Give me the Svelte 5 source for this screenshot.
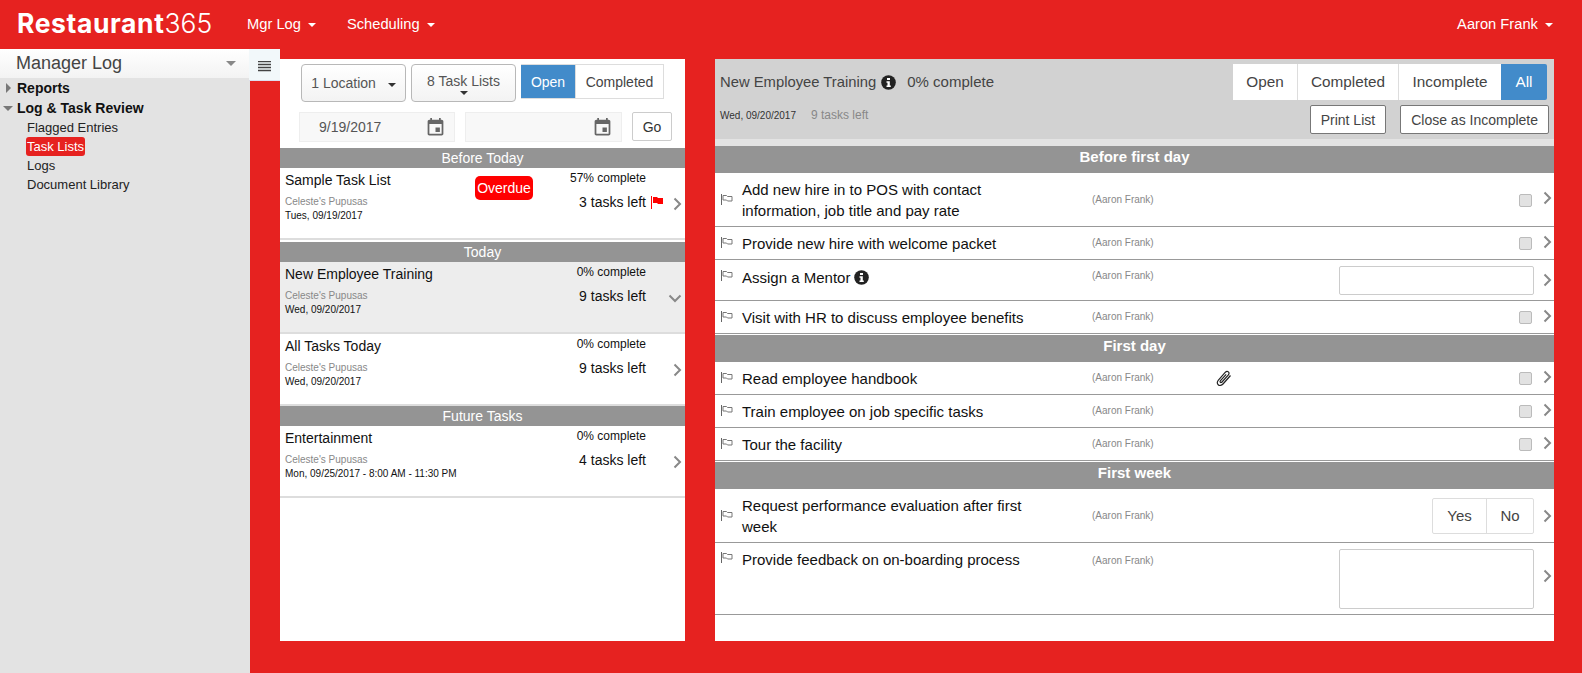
<script>
  const sideLinks = [
    { label: "Flagged Entries" },
    { label: "Task Lists", active: true },
    { label: "Logs" },
    { label: "Document Library" }
  ];

  const groups = [
    {
      title: "Before Today",
      lists: [
        { name: "Sample Task List", date: "Tues, 09/19/2017", pct: "57%", left: 3, overdue: true, flagged: true }
      ]
    },
    {
      title: "Today",
      lists: [
        { name: "New Employee Training", date: "Wed, 09/20/2017", pct: "0%", left: 9, open: true },
        { name: "All Tasks Today", date: "Wed, 09/20/2017", pct: "0%", left: 9 }
      ]
    },
    {
      title: "Future Tasks",
      lists: [
        { name: "Entertainment", date: "Mon, 09/25/2017 - 8:00 AM - 11:30 PM", pct: "0%", left: 4 }
      ]
    }
  ];

  const sections = [
    {
      title: "Before first day",
      tasks: [
        { text: "Add new hire in to POS with contact information, job title and pay rate", kind: "check", cls: "tall" },
        { text: "Provide new hire with welcome packet", kind: "check" },
        { text: "Assign a Mentor", kind: "input", info: true },
        { text: "Visit with HR to discuss employee benefits", kind: "check" }
      ]
    },
    {
      title: "First day",
      tasks: [
        { text: "Read employee handbook", kind: "check", clip: true },
        { text: "Train employee on job specific tasks", kind: "check" },
        { text: "Tour the facility", kind: "check" }
      ]
    },
    {
      title: "First week",
      tasks: [
        { text: "Request performance evaluation after first week", kind: "yesno", cls: "tall" },
        { text: "Provide feedback on on-boarding process", kind: "area" }
      ]
    }
  ];

  const calendar = "M17 12h-5v5h5v-5zM16 1v2H8V1H6v2H5c-1.11 0-1.99.9-1.99 2L3 19c0 1.1.89 2 2 2h14c1.1 0 2-.9 2-2V5c0-1.1-.9-2-2-2h-1V1h-2zm3 18H5V8h14v11z";
</script>

{#snippet chevron()}
  <svg class="chev" width="9" height="14" viewBox="0 0 9 14"><path d="M1.5 1.5 7 7l-5.500 5.500" fill="none" stroke="#888" stroke-width="2" /></svg>
{/snippet}

{#snippet info(cls)}
  <svg class={cls} width="15" height="15" viewBox="0 0 15 15">
    <circle cx="7.500" cy="7.500" r="7.300" fill="#222" />
    <path d="M6 3h3v2H6zM5.500 6.300h3.300v4.200h1v1.500H5.500v-1.500h1V7.800h-1z" fill="#fff" />
  </svg>
{/snippet}

{#snippet dateField(value, cls)}
  <div class="date {cls}">
    <span>{value}</span>
    <svg width="21" height="21" viewBox="0 0 24 24"><path d={calendar} fill="#666" /></svg>
  </div>
{/snippet}

<header class="topbar">
  <div class="logo"><b>Restaurant</b><span>365</span></div>
  <nav class="nav">
    <span class="nav-item">Mgr Log <i class="caret"></i></span>
    <span class="nav-item">Scheduling <i class="caret"></i></span>
  </nav>
  <span class="nav-item user">Aaron Frank <i class="caret"></i></span>
</header>

<div class="main">
  <aside class="sidebar">
    <div class="side-title"><span>Manager Log</span><i class="side-caret"></i></div>
    <div class="tree">
      <div class="tree-head"><i class="tri-right"></i>Reports</div>
      <div class="tree-head"><i class="tri-down"></i>Log &amp; Task Review</div>
      <ul class="links">
        {#each sideLinks as link}
          <li><span class:active={link.active}>{link.label}</span></li>
        {/each}
      </ul>
    </div>
  </aside>

  <div class="toggle">
    <svg width="13" height="11" viewBox="0 0 13 11"><path d="M0 .5h13M0 3.500h13M0 6.500h13M0 9.500h13" stroke="#444" stroke-width="1.600" /></svg>
  </div>

  <section class="lists">
    <div class="filters">
      <button class="dd">1 Location <i class="caret dark gap"></i></button>
      <button class="dd stacked">8 Task Lists<i class="caret dark"></i></button>
      <div class="seg small">
        <button class="on">Open</button>
        <button class="completed">Completed</button>
      </div>
    </div>
    <div class="dates">
      {@render dateField("9/19/2017", "first")}
      {@render dateField("", "second")}
      <button class="go">Go</button>
    </div>

    {#each groups as group}
      <div class="group-title">{group.title}</div>
      {#each group.lists as list}
        <div class="list-row" class:open={list.open}>
          <div class="list-main">
            <div class="list-name">{list.name}</div>
            <div class="list-loc">Celeste's Pupusas</div>
            <div class="list-date">{list.date}</div>
          </div>
          {#if list.overdue}<span class="overdue">Overdue</span>{/if}
          <div class="list-stats">
            <div class="pct">{list.pct} complete</div>
            <div class="left-count">{list.left} tasks left</div>
          </div>
          {#if list.flagged}
            <svg class="red-flag" width="13" height="13" viewBox="0 0 13 13"><path d="M.5 0v13" stroke="#f00" /><path d="M2 1h4l1 1h5v6H7L6 7H2z" fill="#f00" /></svg>
          {/if}
          {#if list.open}
            <svg class="chev-down" width="14" height="9" viewBox="0 0 14 9"><path d="M1.500 1.500 7 7l5.500-5.500" fill="none" stroke="#888" stroke-width="2" /></svg>
          {:else}
            <span class="list-chev">{@render chevron()}</span>
          {/if}
        </div>
      {/each}
    {/each}
  </section>

  <section class="detail">
    <div class="detail-head">
      <div class="head-left">
        <div class="head-title">New Employee Training {@render info("head-info")} <span class="head-pct">0% complete</span></div>
        <div class="head-sub"><span class="head-date">Wed, 09/20/2017</span><span class="head-left-count">9 tasks left</span></div>
      </div>
      <div class="head-right">
        <div class="seg big">
          <button>Open</button>
          <button>Completed</button>
          <button>Incomplete</button>
          <button class="on">All</button>
        </div>
        <div class="head-actions">
          <button class="action">Print List</button>
          <button class="action">Close as Incomplete</button>
        </div>
      </div>
    </div>
    <div class="head-strip"></div>

    {#each sections as sec}
      <div class="sec-title">{sec.title}</div>
      {#each sec.tasks as task}
        <div class="task {task.kind} {task.cls || ''}">
          <svg class="flag" width="12" height="11" viewBox="0 0 12 11">
            <path d="M.5 0v11" stroke="#666" />
            <path d="M2 1.500h3.500l1 1h4.500v4.500H6.500l-1-1H2z" fill="none" stroke="#777" />
          </svg>
          <div class="task-text">{task.text}{#if task.info} {@render info("task-info")}{/if}</div>
          <div class="owner">(Aaron Frank)</div>
          <div class="attach">
            {#if task.clip}
              <svg width="18" height="17" viewBox="0 0 17 17"><path d="M15 5.500 7.500 14c-1.500 1.700-3.600 1.900-4.800.8-1.300-1.100-1.200-3.100.2-4.700l6.800-7.700c1-1.100 2.300-1.300 3.200-.5.900.8.800 2.100-.2 3.200L6.500 12c-.5.600-1.200.700-1.600.3-.400-.4-.4-1 .1-1.600l5.700-6.400" fill="none" stroke="#222" stroke-width="1.200" /></svg>
            {/if}
          </div>
          <div class="control">
            {#if task.kind === "check"}
              <span class="box"></span>
            {:else if task.kind === "input"}
              <span class="field"></span>
            {:else if task.kind === "yesno"}
              <div class="yesno-group"><span>Yes</span><span>No</span></div>
            {:else}
              <span class="field area-field"></span>
            {/if}
          </div>
          <span class="task-chev">{@render chevron()}</span>
        </div>
      {/each}
    {/each}
  </section>
</div>

<style>
  :global(body) {
    background: #e62220;
    font-family: "Liberation Sans", Arial, sans-serif;
    overflow: hidden;
  }

  button {
    font-family: inherit;
    cursor: pointer;
    color: #333;
  }

  .topbar {
    display: flex;
    align-items: center;
    height: 49px;
    padding: 0 29px 2px 17px;
    box-sizing: border-box;
    color: #fff;
  }

  .logo {
    width: 230px;
    font-family: Inter, sans-serif;
    font-size: 26.500px;
    line-height: 49px;
    white-space: nowrap;
  }

  .logo b {
    font-weight: 700;
    letter-spacing: 0.600px;
  }

  .logo span {
    font-weight: 300;
  }

  .nav {
    display: flex;
    gap: 31px;
  }

  .nav-item {
    font-size: 14.700px;
    white-space: nowrap;
  }

  .user {
    margin-left: auto;
  }

  .caret {
    display: inline-block;
    margin-left: 3px;
    vertical-align: 2px;
    border-top: 4px solid #fff;
    border-left: 4px solid transparent;
    border-right: 4px solid transparent;
  }

  .caret.dark {
    border-top-color: #333;
  }

  .main {
    display: flex;
    height: 624px;
    align-items: flex-start;
  }

  .sidebar {
    width: 250px;
    height: 100%;
    flex-shrink: 0;
    background: #e3e3e3;
  }

  .side-title {
    display: flex;
    align-items: center;
    justify-content: space-between;
    height: 29px;
    padding: 0 14px 0 16px;
    background: linear-gradient(#fff, #f3f3f3);
    font-size: 18px;
    color: #444;
  }

  .side-caret {
    border-top: 5px solid #888;
    border-left: 5px solid transparent;
    border-right: 5px solid transparent;
  }

  .tree-head {
    position: relative;
    padding-left: 17px;
    height: 20px;
    line-height: 20px;
    font-size: 14px;
    font-weight: 700;
    color: #111;
  }

  .tri-right {
    position: absolute;
    left: 6px;
    top: 5px;
    border-left: 5px solid #777;
    border-top: 5px solid transparent;
    border-bottom: 5px solid transparent;
  }

  .tri-down {
    position: absolute;
    left: 3px;
    top: 8px;
    border-top: 5px solid #777;
    border-left: 5px solid transparent;
    border-right: 5px solid transparent;
  }

  .links {
    list-style: none;
    margin: 0;
    padding: 0 0 0 26px;
    font-size: 13px;
    color: #222;
  }

  .links li {
    height: 19px;
    line-height: 19px;
  }

  .links span {
    display: inline-block;
    padding: 0 1px;
    border-radius: 3px;
  }

  .links .active {
    background: #e62220;
    color: #fff;
  }

  .toggle {
    display: flex;
    align-items: center;
    justify-content: center;
    width: 31px;
    height: 32px;
    margin-left: -1px;
    padding-top: 3px;
    flex-shrink: 0;
    background: #f2f8fa;
    border-bottom: 1px solid #dde;
    box-sizing: border-box;
  }

  .lists {
    width: 405px;
    height: 582px;
    margin-top: 10px;
    flex-shrink: 0;
    background: #fff;
  }

  .filters {
    display: flex;
    gap: 5px;
    height: 43px;
    padding: 5px 0 0 21px;
    box-sizing: content-box;
  }

  .dd {
    width: 105px;
    height: 38px;
    padding: 0;
    border: 1px solid #b8b8b8;
    border-radius: 4px;
    background: linear-gradient(#fff, #f3f3f3);
    font-size: 14px;
    color: #555;
  }

  .gap {
    margin-left: 8px;
    vertical-align: 1px;
  }

  .stacked {
    padding-top: 1px;
    line-height: 17px;
  }

  .stacked .caret {
    display: block;
    width: 0;
    margin: 1px auto 0;
  }

  .seg {
    display: flex;
  }

  .seg button {
    padding: 0;
    border: 0;
    border-right: 1px solid #ddd;
    background: #fff;
    font-size: 14px;
    color: #444;
  }

  .seg button:last-child {
    border-right: 0;
  }

  .seg .on {
    background: #428bca;
    color: #fff;
  }

  .seg.small {
    height: 35px;
    border: 1px solid #ddd;
    box-sizing: border-box;
  }

  .seg.small .on {
    width: 55px;
    margin-left: -1px;
  }

  .seg.small .completed {
    width: 87px;
  }

  .seg.big {
    height: 36px;
  }

  .seg.big button {
    font-size: 15.300px;
  }

  .seg.big button:nth-child(1) {
    width: 65px;
  }

  .seg.big button:nth-child(2) {
    width: 101px;
  }

  .seg.big button:nth-child(3) {
    width: 102px;
    border-right: 0;
  }

  .seg.big button:nth-child(4) {
    width: 46px;
    border-radius: 0 2px 2px 0;
  }

  .dates {
    display: flex;
    align-items: flex-start;
    gap: 10px;
    height: 36px;
    padding: 5px 0 0 19px;
  }

  .date {
    display: flex;
    align-items: center;
    justify-content: space-between;
    height: 30px;
    padding: 0 8px 0 19px;
    background: #f8f8f8;
    border: 1px solid #eee;
    box-sizing: border-box;
    font-size: 14px;
    color: #555;
  }

  .first {
    width: 156px;
  }

  .second {
    width: 157px;
  }

  .go {
    width: 40px;
    height: 29px;
    padding: 0;
    border: 1px solid #ccc;
    border-radius: 2px;
    background: #fff;
    font-size: 14px;
  }

  .group-title {
    height: 20px;
    line-height: 20px;
    background: #949494;
    color: #fff;
    font-size: 14px;
    text-align: center;
  }

  .group-title + .list-row + .group-title {
    margin-top: 2px;
  }

  .list-row {
    position: relative;
    display: flex;
    height: 72px;
    padding: 0 0 0 5px;
    border-bottom: 2px solid #ddd;
    box-sizing: border-box;
  }

  .list-row.open {
    background: #ededed;
  }

  .list-main {
    flex: 1;
  }

  .list-name {
    margin-top: 4px;
    font-size: 14px;
    line-height: 16px;
    color: #111;
  }

  .list-loc {
    margin-top: 8px;
    font-size: 10px;
    line-height: 12px;
    color: #888;
  }

  .list-date {
    margin-top: 2px;
    font-size: 10px;
    line-height: 12px;
    color: #111;
  }

  .overdue {
    position: absolute;
    left: 195px;
    top: 8px;
    width: 58px;
    height: 24px;
    line-height: 24px;
    background: #f00;
    border-radius: 5px;
    color: #fff;
    font-size: 14px;
    text-align: center;
  }

  .list-stats {
    width: 120px;
    margin-right: 39px;
    text-align: right;
    color: #111;
  }

  .pct {
    margin-top: 3px;
    font-size: 12px;
    line-height: 14px;
  }

  .left-count {
    margin-top: 9px;
    font-size: 14px;
    line-height: 16px;
  }

  .red-flag {
    position: absolute;
    left: 371px;
    top: 28px;
  }

  .list-chev {
    position: absolute;
    right: 3px;
    top: 29px;
  }

  .chev-down {
    position: absolute;
    right: 3px;
    top: 32px;
  }

  .chev {
    display: block;
  }

  .detail {
    width: 839px;
    height: 582px;
    margin: 10px 0 0 30px;
    flex-shrink: 0;
    background: #fff;
  }

  .detail-head {
    display: flex;
    justify-content: space-between;
    height: 80px;
    background: #d2d2d2;
  }

  .head-left {
    padding: 14px 0 0 5px;
  }

  .head-title {
    display: flex;
    align-items: center;
    gap: 5px;
    font-size: 14.800px;
    line-height: 18px;
    color: #444;
  }

  .head-pct {
    margin-left: 6px;
    font-size: 15px;
  }

  .head-sub {
    display: flex;
    align-items: baseline;
    gap: 15px;
    margin-top: 17px;
  }

  .head-date {
    font-size: 10px;
    color: #333;
  }

  .head-left-count {
    font-size: 12px;
    color: #888;
  }

  .head-right {
    padding: 5px 7px 0 0;
  }

  .head-actions {
    display: flex;
    justify-content: flex-end;
    gap: 14px;
    margin-top: 5px;
    margin-right: -2px;
  }

  .action {
    height: 29px;
    padding: 0 10px;
    border: 1px solid #777;
    border-radius: 2px;
    background: #fff;
    font-size: 14px;
    color: #444;
  }

  .head-strip {
    height: 7px;
    background: #e3e3e3;
  }

  .sec-title {
    height: 27px;
    line-height: 22px;
    background: #949494;
    color: #fff;
    font-size: 15px;
    font-weight: 700;
    text-align: center;
  }

  .task + .sec-title {
    margin-top: 1px;
  }

  .task {
    display: grid;
    grid-template-columns: 21px 350px 123px 45px 1fr 20px;
    align-items: center;
    height: 33px;
    padding-left: 6px;
    border-bottom: 1px solid #999;
    box-sizing: border-box;
  }

  .task.tall {
    height: 54px;
  }

  .task.input {
    height: 41px;
  }

  .task.area {
    height: 72px;
    align-items: start;
  }

  .task-text {
    display: flex;
    flex-wrap: wrap;
    align-items: center;
    gap: 0 4px;
    width: 300px;
    font-size: 15px;
    line-height: 21px;
    color: #111;
  }

  .tall .task-text {
    display: block;
  }

  .owner {
    font-size: 10px;
    color: #888;
  }

  .attach svg {
    display: block;
  }

  .control {
    display: flex;
    justify-content: flex-end;
  }

  .box {
    width: 13px;
    height: 13px;
    margin: 1px 2px 0 0;
    border: 1px solid #bbb;
    border-radius: 2px;
    background: #e2e2e2;
    box-sizing: border-box;
  }

  .field {
    display: block;
    width: 195px;
    height: 29px;
    border: 1px solid #ccc;
    border-radius: 2px;
    box-sizing: border-box;
  }

  .area-field {
    height: 60px;
  }

  .yesno-group {
    display: flex;
    width: 102px;
    height: 36px;
    border: 1px solid #ddd;
    border-radius: 2px;
    box-sizing: border-box;
    font-size: 15px;
    color: #444;
  }

  .yesno-group span {
    flex: 1;
    line-height: 33px;
    text-align: center;
  }

  .yesno-group span:first-child {
    flex: 0 0 53px;
    border-right: 1px solid #ddd;
  }

  .task-chev {
    padding-left: 9px;
  }

  .check .task-chev {
    margin-top: -3px;
  }

  .task.check:not(.tall) .flag,
  .task.check:not(.tall) .owner {
    margin-bottom: 2px;
  }

  .task.input .flag,
  .task.input .owner {
    margin-bottom: 10px;
  }

  .task.input .task-text {
    margin-bottom: 6px;
  }

  .task.area .flag {
    margin-top: 9px;
  }

  .task.area .task-text {
    margin-top: 6px;
  }

  .task.area .owner {
    margin-top: 12px;
  }

  .task.area .control {
    margin-top: 6px;
  }

  .task.area .task-chev {
    margin-top: 26px;
  }
</style>
